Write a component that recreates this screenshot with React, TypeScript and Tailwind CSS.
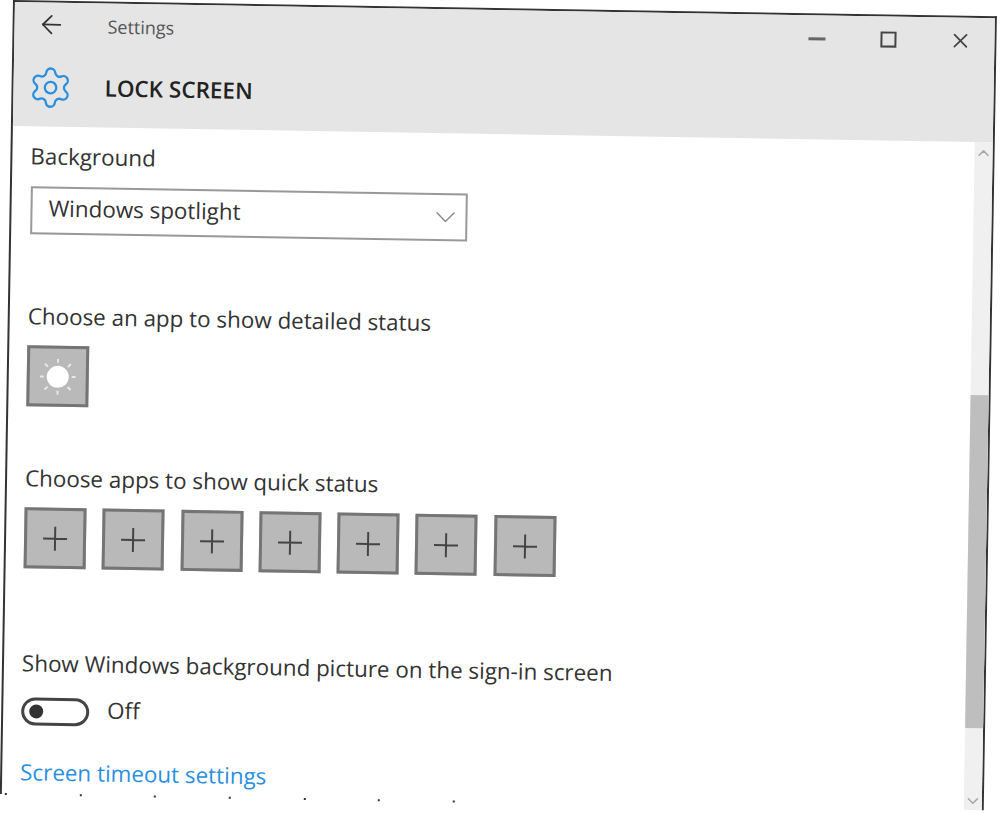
import { ArrowLeft, ChevronDown, ChevronUp, Settings, X } from 'lucide-react';

const font = "font-['Open_Sans','Liberation_Sans',sans-serif]";

function SunIcon() {
  return (
    <svg width="36" height="36" viewBox="0 0 36 36">
      <circle cx="18" cy="18" r="11" fill="#ffffff" />
      <g stroke="#e8e8e8" strokeWidth="2">
        <path d="M18 0v4M18 32v4M0 18h4M32 18h4M5 5l3 3M28 28l3 3M5 31l3-3M28 8l3-3" />
      </g>
    </svg>
  );
}

function PlusIcon() {
  return (
    <svg width="26" height="26" viewBox="0 0 26 26">
      <path d="M13 1v24M1 13h24" stroke="#444444" strokeWidth="2" />
    </svg>
  );
}

function Tile({ children }: { children: React.ReactNode }) {
  return (
    <div className="flex h-[61px] w-[62px] items-center justify-center border-[3px] border-[#757575] bg-[#b9b9b9]">
      {children}
    </div>
  );
}

export default function App() {
  return (
    <div className={`h-[814px] w-[1000px] overflow-hidden bg-white ${font}`}>
      <div className="relative ml-[13px] flex h-[794px] w-[984px] origin-top-left rotate-[0.95deg] flex-col border-x-2 border-t-2 border-[#333333]">
        {/* Title bar + page header */}
        <div className="h-[124px] bg-[#e5e5e5]">
          <div className="flex h-[50px] items-center">
            <ArrowLeft className="mb-[7px] ml-[22px] text-[#333333]" size={30} strokeWidth={1.4} />
            <span className="mb-[4px] ml-[41px] text-[18px] text-[#555555]">Settings</span>
            <div className="mb-[4px] ml-auto flex items-center">
              <div className="h-[3px] w-[17px] bg-[#666666]" />
              <div className="ml-[55px] h-[16px] w-[16px] border-2 border-[#444444]" />
              <X className="ml-[52px] mr-[22px] text-[#444444]" size={24} strokeWidth={1.75} />
            </div>
          </div>
          <div className="flex h-[72px] items-center">
            <Settings className="mb-[2px] ml-[14px] text-[#2b8fdf]" size={46} strokeWidth={1.2} />
            <span className="mb-[2px] ml-[31px] text-[22.5px] font-semibold text-[#222222]">LOCK SCREEN</span>
          </div>
        </div>

        <div className="flex flex-1">
          {/* Content */}
          <div className="flex-1 pl-[18px] pt-[16px] text-[22.4px] leading-[28px] text-[#333333]">
            <div>Background</div>
            <div className="ml-px mt-[16px] flex h-[48px] w-[437px] items-center justify-between border-2 border-[#999999] pl-[16px] pr-[3px]">
              <span className="mb-[4px]">Windows spotlight</span>
              <ChevronDown className="text-[#888888]" size={34} strokeWidth={1} />
            </div>

            <div className="mt-[68px]">Choose an app to show detailed status</div>
            <div className="mt-[15px]">
              <Tile>
                <SunIcon />
              </Tile>
            </div>

            <div className="mt-[58px]">Choose apps to show quick status</div>
            <div className="mt-[15px] flex gap-[16.3px]">
              {[0, 1, 2, 3, 4, 5, 6].map((i) => (
                <Tile key={i}>
                  <PlusIcon />
                </Tile>
              ))}
            </div>

            <div className="mt-[81px]">Show Windows background picture on the sign-in screen</div>
            <div className="mt-[18px] flex items-center">
              <div className="flex h-[28px] w-[68px] items-center rounded-full border-[3px] border-[#444444] pl-[5px]">
                <div className="h-[14px] w-[14px] rounded-full bg-[#333333]" />
              </div>
              <span className="mb-[4px] ml-[18px]">Off</span>
            </div>

            <div className="mt-[31px] text-[#2b8fdf]">Screen timeout settings</div>
          </div>

          {/* Scrollbar */}
          <div className="flex w-[18px] flex-col bg-[#f0f0f0]">
            <ChevronUp className="mt-[2px] text-[#a6a6a6]" size={18} strokeWidth={2} />
            <div className="mt-[233px] h-[333px] bg-[#bebebe]" />
            <ChevronDown className="mt-[64px] text-[#a6a6a6]" size={18} strokeWidth={2} />
          </div>
        </div>

        {/* Dotted bottom edge */}
        <div className="absolute left-[3px] top-[791px] flex w-[450px] justify-between">
          {[0, 1, 2, 3, 4, 5, 6].map((i) => (
            <div key={i} className="h-[2px] w-[2px] bg-[#333333]" />
          ))}
        </div>
      </div>
    </div>
  );
}
